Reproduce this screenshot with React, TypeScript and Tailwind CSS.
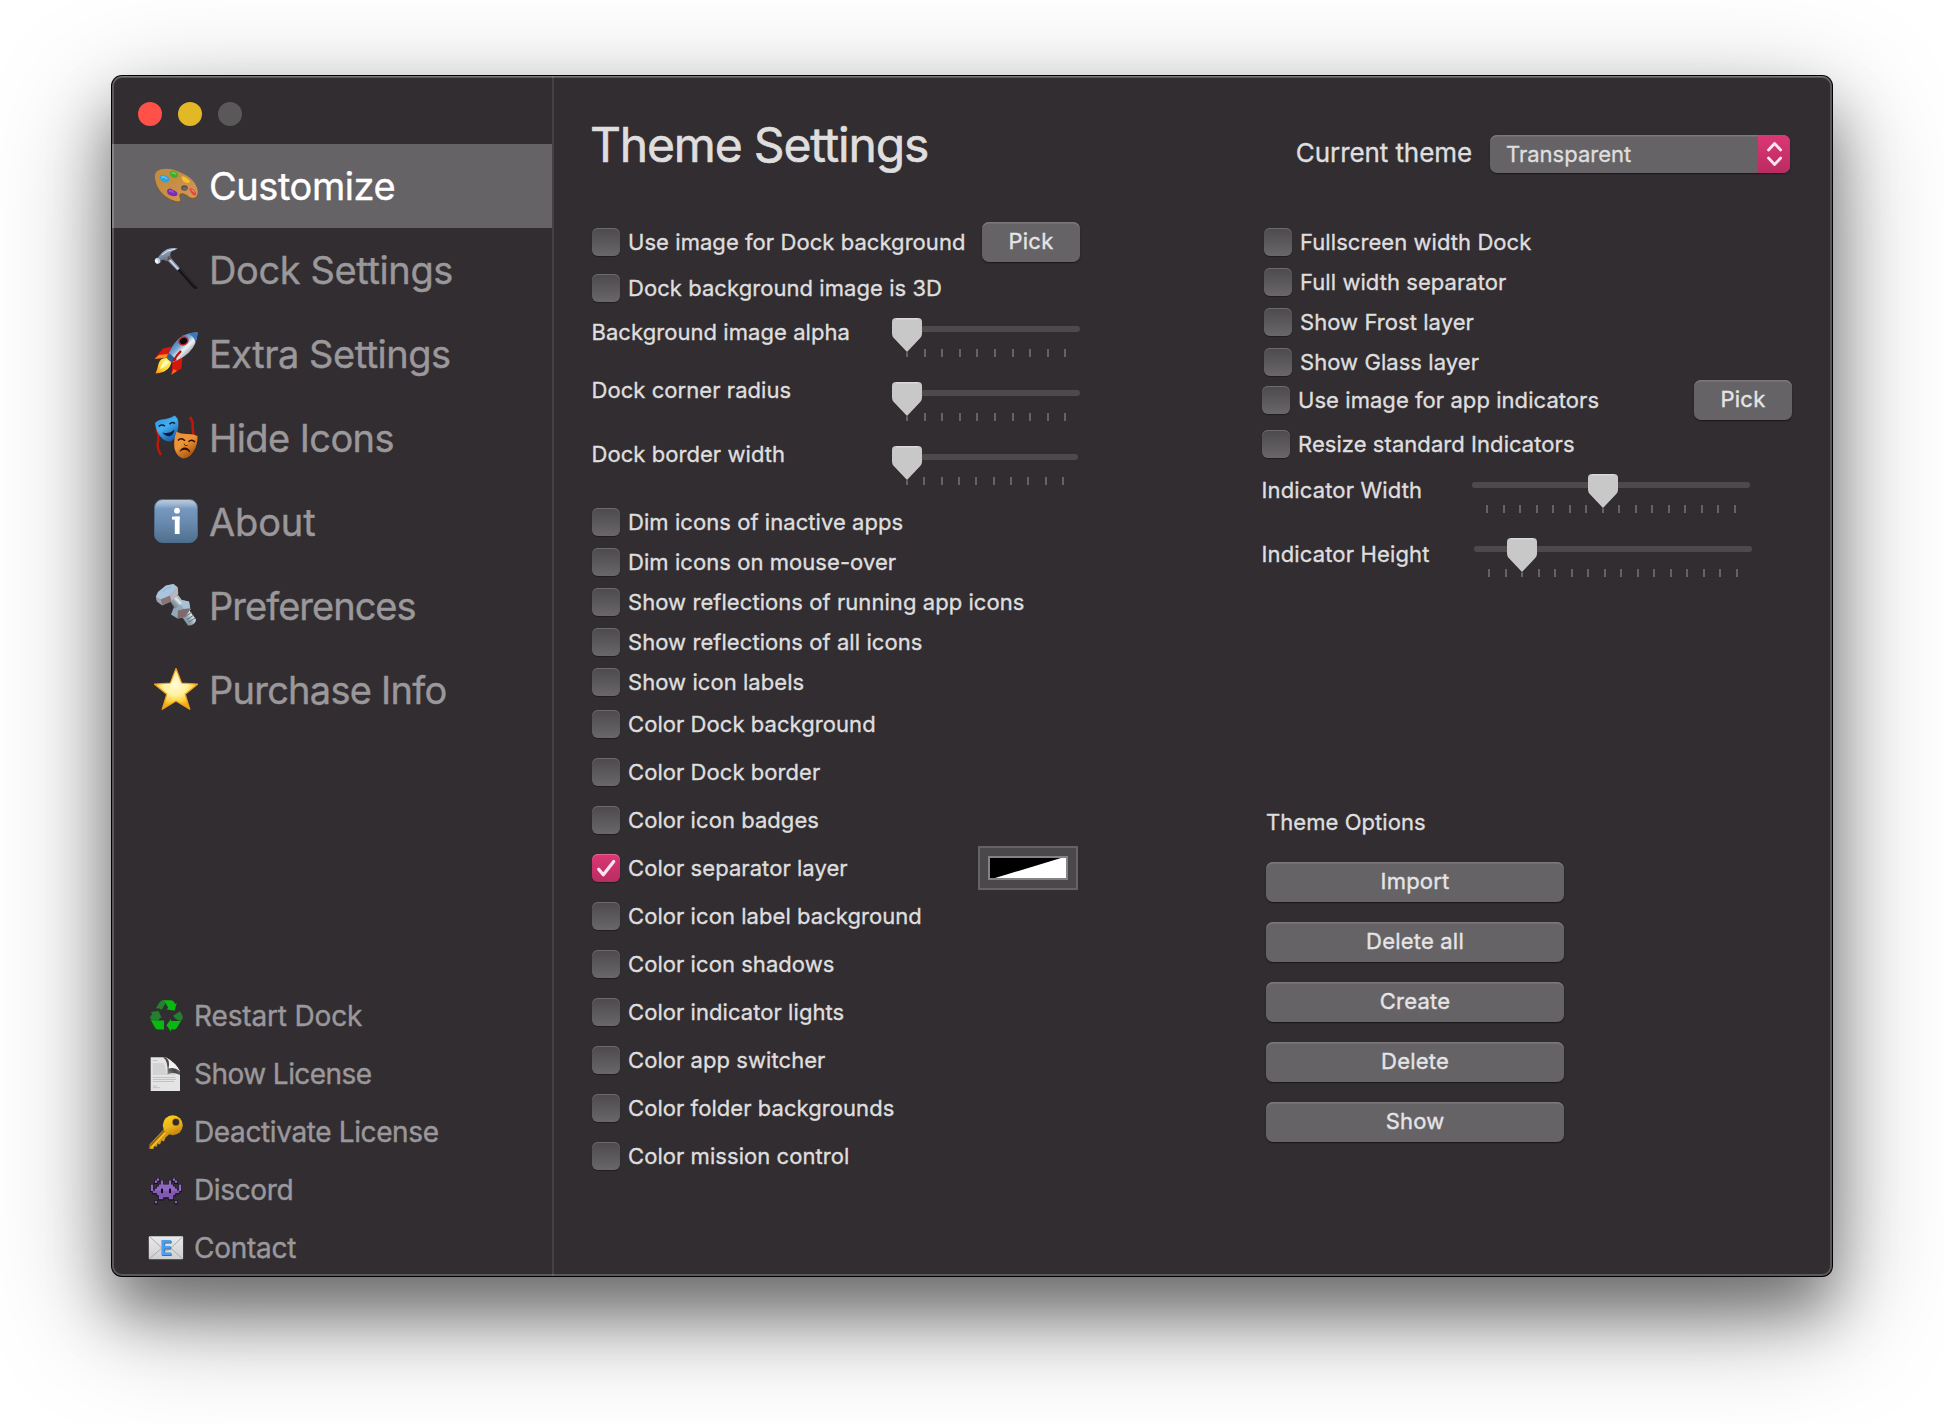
import type { ReactNode } from "react";

/* ---------- Sidebar icons (44 x 44) ---------- */

function PaletteIcon() {
  return (
    <svg viewBox="0 0 44 44" className="size-full">
      <defs>
        <linearGradient id="pal" x1="0" y1="0" x2="1" y2="1">
          <stop offset="0" stopColor="#c08a3c" />
          <stop offset="0.55" stopColor="#c98f49" />
          <stop offset="1" stopColor="#d79a60" />
        </linearGradient>
      </defs>
      <path d="M0.8 15C0.3 9 4 6 12.6 5.9C19 5.9 27 9.5 33 13.4C39.500 17.8 43.600 24 43.700 29.500C43.700 33.500 41.500 36.600 38 36C35 35.500 33 32.500 29.500 31.600C27 31 25.500 32.300 26.200 34.500C27 37 27.500 39.500 25 39.600C20 39.600 13 36.400 8.500 31.500C4 27 1.200 20.500 0.800 15Z" fill="#8a5a1c" />
      <path d="M0.9 14C0.6 8.500 4 5.900 12.600 5.700C19 5.700 27 9 33 12.800C39.500 17.200 43.600 23.300 43.700 28.700C43.700 32.500 41.500 35.400 38 34.800C35 34.300 33 31.300 29.500 30.400C26.500 29.800 24.700 31.300 25.400 33.700C26.200 36.200 26.700 38.300 24.600 38.300C20 38.300 13 35.400 8.500 30.500C4 26 1.200 19.500 0.900 14Z" fill="url(#pal)" />
      <ellipse cx="30.500" cy="25" rx="3.300" ry="2.700" fill="#5a4a3c" />
      <ellipse cx="30.800" cy="25.600" rx="2.500" ry="1.900" fill="#6a686a" />
      <path d="M5.500 13.500q1-2.500 4-1.500l3 1q3.500 1.500 3 4t-4.500 2.500q-4.500-.5-5.500-6z" fill="#2ea3dc" />
      <path d="M7.500 14q3-1 5.500 2" stroke="#8fdcf7" strokeWidth="1" fill="none" />
      <path d="M15.500 10q1-2.500 4-2l3.500 1.500q2 2.500.5 4.500t-4.500.5q-3-1-3.500-4.500z" fill="#3fae2a" />
      <path d="M17.500 10q3-1 4.500 1.500" stroke="#8fe07a" strokeWidth="1" fill="none" />
      <path d="M27.500 14.500q.5-2 3.500-.5t4.500 3.500-2 2.500q-5-.5-6-5.500z" fill="#f2c22c" />
      <path d="M13 28.500q0-3 3.500-3l3.500 2q4 1.500 3.500 4t-5 1.500q-5-.5-5.500-4.500z" fill="#7b2fb0" />
      <path d="M15 28q2.500-1 4.500 1.500" stroke="#b67be0" strokeWidth="1" fill="none" />
      <path d="M35.500 26q1-1.500 4 .5 3.500 3 2.500 5t-3 .2q-3-2-3.500-5.700z" fill="#e2473e" />
      <path d="M37.500 27q2 .5 3 2.500" stroke="#ff9c90" strokeWidth="1" fill="none" />
    </svg>
  );
}

function HammerIcon() {
  return (
    <svg viewBox="0 0 44 44" className="size-full">
      <defs>
        <linearGradient id="ham" x1="0" y1="0" x2="0.5" y2="1">
          <stop offset="0" stopColor="#c9d6ea" />
          <stop offset="0.500" stopColor="#8495ae" />
          <stop offset="1" stopColor="#5e6470" />
        </linearGradient>
      </defs>
      <path d="M23 22.500L26 20.500L43 39.500Q44 42 41.500 42Q40 41.800 38.500 40.200Z" fill="#161618" />
      <path d="M26 21.500L42 39.500" stroke="#3a3a3d" strokeWidth="0.900" />
      <path d="M12.500 12.500L16 10L26 21.200L23.200 23.500Z" fill="#8c97ab" />
      <path d="M14.800 12L24.300 22.300" stroke="#dde6f5" strokeWidth="1.200" />
      <path d="M4 10.500Q8 4.500 13 2.200Q18 .5 23.600 1.200Q22.500 3 18.500 4Q15.500 5 16.500 9.500L16.800 12.500L12.500 14.500Q9.500 11.500 7 13.800Z" fill="url(#ham)" />
      <path d="M8 8Q13 3 21 2" stroke="#e2ebf8" strokeWidth="1" fill="none" />
      <path d="M14 9.500L16.500 9V12L13.500 13.500Z" fill="#6b4e4c" />
      <ellipse cx="3.600" cy="13.800" rx="2.700" ry="3.100" fill="#bcd0ea" transform="rotate(-25 3.600 13.800)" />
      <ellipse cx="2.600" cy="14.300" rx="1.500" ry="2.100" fill="#f5faff" transform="rotate(-25 2.600 14.300)" />
    </svg>
  );
}

function RocketIcon() {
  return (
    <svg viewBox="0 0 44 44" className="size-full">
      <defs>
        <linearGradient id="rkt" x1="0.200" y1="0.200" x2="0.800" y2="0.800">
          <stop offset="0" stopColor="#2d66a8" />
          <stop offset="0.400" stopColor="#7fa8d2" />
          <stop offset="0.600" stopColor="#f1f4f4" />
          <stop offset="1" stopColor="#6f8089" />
        </linearGradient>
        <linearGradient id="flm" x1="1" y1="0" x2="0" y2="1">
          <stop offset="0" stopColor="#fff27a" />
          <stop offset="0.600" stopColor="#ffd52b" />
          <stop offset="1" stopColor="#ff8a12" />
        </linearGradient>
      </defs>
      <path d="M17.500 15.500L9 17.500L0.600 27.500L13 26.500Z" fill="#d5170d" />
      <path d="M5 24L0.500 28L12.500 26.800L14 23Z" fill="#ff8a18" />
      <path d="M28.500 26L27.500 37.500L17.500 43.500L18.500 31Z" fill="#d5170d" />
      <path d="M19.500 38L17.200 43.800L23 40Z" fill="#ff6a18" />
      <path d="M13 27Q6 26.500 4.500 33Q3.500 38 1.500 42.500Q12 41.500 15.500 36Q17.500 33 17 30Z" fill="url(#flm)" />
      <path d="M12.500 29Q7.500 31 6 38Q12.500 36 15 31Z" fill="#fffbb0" />
      <path d="M43.500 1.500Q33 1.500 26 6.500Q19.500 11.500 15 21.500L13 27.500L17.500 31.500Q28 28 35 21.500Q43 13.500 43.500 1.500Z" fill="url(#rkt)" />
      <path d="M43.500 1.500Q38 1.500 34 2.900Q40.500 5 41.500 12Q43.500 7.500 43.500 1.500Z" fill="#3b79bf" />
      <path d="M15 22L13 27.500L17.500 31.500L23 29Z" fill="#2c5b93" />
      <path d="M27 20Q22 25 19.500 30" stroke="#c00f0a" strokeWidth="2.400" fill="none" />
      <ellipse cx="29.500" cy="10" rx="5.400" ry="4.500" fill="#c22b23" transform="rotate(-28 29.500 10)" />
      <ellipse cx="29.500" cy="10" rx="3.800" ry="3" fill="#0d0a12" transform="rotate(-28 29.500 10)" />
    </svg>
  );
}

function MasksIcon() {
  return (
    <svg viewBox="0 0 44 44" className="size-full">
      <defs>
        <linearGradient id="mb" x1="0" y1="0" x2="0.600" y2="1">
          <stop offset="0" stopColor="#2a8ed8" />
          <stop offset="0.500" stopColor="#43b0f2" />
          <stop offset="1" stopColor="#1b5fae" />
        </linearGradient>
        <linearGradient id="mo" x1="0" y1="0" x2="0.600" y2="1">
          <stop offset="0" stopColor="#e8923a" />
          <stop offset="0.500" stopColor="#ee9436" />
          <stop offset="1" stopColor="#a9520f" />
        </linearGradient>
      </defs>
      <path d="M2.500 14Q5.500 22 3.800 28Q3 34 7 40" stroke="#c2160b" strokeWidth="2.400" fill="none" />
      <path d="M36 2Q39.500 7 38.500 12L39.500 20" stroke="#c2160b" strokeWidth="2.600" fill="none" />
      <path d="M1 8Q4 4.500 10.500 4.200Q17 3.500 20.500 0.600Q24.500 3 24.400 9Q24.300 17 21.500 22Q18.500 27 14.500 26.400Q9 25.500 5.500 20.500Q1.500 14.500 1 8Z" fill="url(#mb)" />
      <path d="M4.800 11.500Q7.500 8.500 11 11.200M15.500 9.300Q18 6 21 8.500" stroke="#0a1d38" strokeWidth="1.500" fill="none" />
      <path d="M8.500 17.500Q15 19.500 20.500 14.500Q19.500 20.500 15.500 21.200Q11.500 21.500 8.500 17.500Z" fill="#0a1d38" />
      <path d="M22.500 16.800Q27 19 32.500 19Q38.500 18.500 43.500 21Q43.800 30 39.500 36.500Q35 43.500 29 43.500Q22.500 41.500 20.500 33.500Q19.200 25 22.500 16.800Z" fill="url(#mo)" />
      <path d="M24 25.500Q27 22 31 25.800M34.500 26.800Q37.500 23.500 41 27" stroke="#2c0f02" strokeWidth="1.500" fill="none" />
      <path d="M25.500 37Q27 32 31.500 32.500Q36 33.500 36.500 38Q33.500 34.800 31 34.800Q28 34.800 25.500 37Z" fill="#2c0f02" />
      <path d="M30 28.500L31 30.500H33.500" stroke="#6b2f08" strokeWidth="1" fill="none" />
    </svg>
  );
}

function InfoIcon() {
  return (
    <svg viewBox="0 0 44 44" className="size-full">
      <defs>
        <linearGradient id="inf" x1="0" y1="0" x2="0" y2="1">
          <stop offset="0" stopColor="#bccbdd" />
          <stop offset="0.100" stopColor="#a3b9d2" />
          <stop offset="0.220" stopColor="#7598c0" />
          <stop offset="0.500" stopColor="#6b8cb0" />
          <stop offset="1" stopColor="#4e6f8c" />
        </linearGradient>
      </defs>
      <rect x="0.500" y="0.500" width="43" height="43" rx="8" fill="url(#inf)" stroke="#4d6e8f" strokeWidth="1" />
      <circle cx="23" cy="11.700" r="2.900" fill="#fff" />
      <rect x="18" y="17.600" width="7.600" height="3" fill="#fff" />
      <rect x="20.800" y="17.600" width="4.800" height="17.400" fill="#fff" />
    </svg>
  );
}

function BoltIcon() {
  return (
    <svg viewBox="0 0 44 44" className="size-full">
      <defs>
        <linearGradient id="shf" x1="0" y1="1" x2="1" y2="0">
          <stop offset="0" stopColor="#5b656c" />
          <stop offset="0.450" stopColor="#8fa1ab" />
          <stop offset="0.600" stopColor="#dfe9ee" />
          <stop offset="1" stopColor="#59636a" />
        </linearGradient>
      </defs>
      <path d="M16 17L24 12L42 36.500Q41.500 42.500 34 42.500Z" fill="url(#shf)" />
      <path d="M31.500 33.500L38 29M33 36.500L40 32M34.500 39L41.500 35" stroke="#59656d" strokeWidth="0.900" />
      <path d="M17 31.500L20 24L27.500 17L35 18.500L36.500 26.500L31 34.500L23.500 35.500Z" fill="#8fa9b8" />
      <path d="M27.500 17L35 18.500L36 25L30 26L26 20.500Z" fill="#a8c3d5" />
      <path d="M24 27.500L30 26L36.300 25.500L31 34.300L23.500 35.300Z" fill="#80686c" />
      <path d="M16 18L24 12.500L29 19.500L21 25.800Z" fill="url(#shf)" />
      <path d="M1.800 14L4 9L12 2.500L19.500 1L23.800 4.500L24.200 11L17.500 18.500L8.500 22.500L3 18.500Z" fill="#8b7478" />
      <path d="M1.800 14L4 9L12 2.500L19.500 1L23.800 4.500L16 12.500L6.500 16.500Z" fill="#a9c4dd" />
      <path d="M1.800 14L6.500 16.500L8.500 22.500L3 18.500Z" fill="#9aa5ad" />
      <path d="M16 12.500L23.800 4.500L24.200 11L17.500 18.500Z" fill="#b7b8bd" />
      <path d="M8.500 8.500Q12 4.500 17 4.500" stroke="#8bb2d9" strokeWidth="1" fill="none" />
    </svg>
  );
}

function StarIcon() {
  return (
    <svg viewBox="0 0 44 44" className="size-full">
      <defs>
        <radialGradient id="str" cx="0.480" cy="0.380" r="0.550">
          <stop offset="0" stopColor="#fffbd8" />
          <stop offset="0.500" stopColor="#fff1a0" />
          <stop offset="0.800" stopColor="#fdd13a" />
          <stop offset="1" stopColor="#f3a81a" />
        </radialGradient>
      </defs>
      <path d="M22 1.500L27.600 16L43.500 17.200L31.200 27.200L35.800 42.300L22 34L8.200 42.300L12.800 27.200L0.500 17.200L16.400 16Z" fill="url(#str)" stroke="#ef9f22" strokeWidth="1.200" strokeLinejoin="round" />
    </svg>
  );
}

/* ---------- Footer icons (34 x 34) ---------- */

function RecycleIcon() {
  return (
    <svg viewBox="0 0 34 34" className="size-full">
      <g fill="#267f30">
        <path d="M6.800 9.600L10 4Q11.500 1.300 14 1.300L17.300 3L12.800 10.800Q10 8.500 6.800 9.600Z" />
        <path d="M1.500 13L9.500 12L13 19.300L11.300 18.600L9.500 21.500H4.500L0.800 18.500L3.300 14.500Z" />
        <path d="M24 16.800L31 12.200L33.300 16.500Q34.300 18.500 33 20.500L29.500 21.300Q26.800 20.500 24 16.800Z" />
      </g>
      <g fill="#08b90f">
        <path d="M13.500 1.300H22Q24 1.300 25 3L26 5L27.800 4.300L25.500 11.800L17.300 10.300L19.300 9L16 2.800Z" />
        <path d="M1 19.300Q2.500 21.600 6 21.600H15V30.600H9.500Q7.200 30.600 6 28.700Z" />
        <path d="M33.300 19.500L28 28.700Q26.900 30.600 24.700 30.600H22V32.700L17.500 26.300L22 19.800V22H28.500Q31.800 22 33.300 19.500Z" />
      </g>
    </svg>
  );
}

function DocumentIcon() {
  return (
    <svg viewBox="0 0 34 34" className="size-full">
      <defs>
        <linearGradient id="curl" x1="0" y1="1" x2="1" y2="0.200">
          <stop offset="0" stopColor="#d0d0d0" />
          <stop offset="0.300" stopColor="#6a6a6a" />
          <stop offset="0.550" stopColor="#444" />
          <stop offset="1" stopColor="#bbb" />
        </linearGradient>
      </defs>
      <path d="M1.700 0.300H16.500L31 14V34.300H1.700Z" fill="#e4e4e4" />
      <path d="M3.800 3.500H8.500M3.800 7H15M3.800 9H16M3.800 11H16M3.800 13H17M3.800 15H17M3.800 17H26M3.800 20.500H26.500M3.800 22.500H27M3.800 24.500H25M3.800 29H8M3.800 30.700H11" stroke="#bdbdbd" strokeWidth="0.900" />
      <path d="M14 0.300Q19.500 4 18.500 17.500Q24 14.500 31 18V13.500L16.500 0.300Z" fill="url(#curl)" />
      <path d="M17 0.300Q21.500 4.500 19.500 11.500Q25.500 9.500 31 14Q27 6 17 0.300Z" fill="#f2f2f2" />
    </svg>
  );
}

function KeyIcon() {
  return (
    <svg viewBox="0 0 34 34" className="size-full">
      <defs>
        <linearGradient id="key" x1="0" y1="0" x2="0.400" y2="1">
          <stop offset="0" stopColor="#fbd21c" />
          <stop offset="0.600" stopColor="#eeb61a" />
          <stop offset="1" stopColor="#c68a12" />
        </linearGradient>
      </defs>
      <path d="M15 14L0.500 29.500V34H4.500L5 31.500H8L8.500 28.500L11 29.500L12.500 25.500L15 26.500L16.500 22.500L20.500 19Z" fill="#d39a14" />
      <path d="M15.500 15.500L1 31" stroke="#8c5f0a" strokeWidth="1.200" />
      <path d="M16.500 17.500L2.500 32.500" stroke="#f2c93c" strokeWidth="1.100" />
      <circle cx="23.800" cy="10.200" r="10" fill="url(#key)" />
      <circle cx="26.900" cy="7.200" r="3.900" fill="#b98212" />
      <circle cx="26.900" cy="7.200" r="3.100" fill="#2f2a2d" />
    </svg>
  );
}

const INVADER = [
  "...#.......#...",
  "..#..#...#..#..",
  ".....#...#.....",
  "#...#######...#",
  "#..#########..#",
  "#.###.###.###.#",
  ".####.###.####.",
  "...#########...",
  "....#######....",
  "....##...##....",
  "...............",
  "..#.........#..",
];

function InvaderIcon() {
  const cells = INVADER.flatMap((row, y) =>
    [...row].flatMap((c, x) => (c === "#" ? [{ x: 2 + x * 2, y: 5.500 + y * 2.050 }] : [])),
  );
  return (
    <svg viewBox="0 0 34 34" className="size-full">
      {cells.map((c, i) => (
        <rect key={i} x={c.x - 1} y={c.y - 0.500} width="4" height="3.900" fill="#17111d" />
      ))}
      {cells.map((c, i) => (
        <rect key={i} x={c.x - 0.200} y={c.y - 0.100} width="2.400" height="2.400" fill={c.y > 16 ? "#8259b3" : "#9169c2"} />
      ))}
      <rect x="12" y="15.600" width="2" height="4.500" fill="#120a1c" />
      <rect x="20" y="15.600" width="2" height="4.500" fill="#120a1c" />
    </svg>
  );
}

function EnvelopeIcon() {
  return (
    <svg viewBox="0 0 34 34" className="size-full overflow-visible">
      <defs>
        <linearGradient id="env" x1="0" y1="0" x2="0" y2="1">
          <stop offset="0" stopColor="#e9e9e9" />
          <stop offset="1" stopColor="#cfcfcf" />
        </linearGradient>
      </defs>
      <rect x="-0.200" y="5.300" width="34.300" height="23" rx="1" fill="url(#env)" />
      <path d="M1 6L14.500 18.500Q17.300 20.500 20 18.500L33.500 6M0.500 27.700L13 17M33.500 27.700L21.500 17" stroke="#a6a6a6" strokeWidth="0.900" fill="none" />
      <text x="17.500" y="24.700" textAnchor="middle" fontFamily="Inter" fontWeight="700" fontSize="19.500" fill="#5b6a7a">E</text>
      <text x="16.900" y="23.900" textAnchor="middle" fontFamily="Inter" fontWeight="700" fontSize="19.500" fill="#4a9ff5">E</text>
    </svg>
  );
}

/* ---------- Controls ---------- */

function Check({ label, checked = false }: { label: string; checked?: boolean }) {
  return (
    <label className="flex h-7 items-center gap-2 pl-0.5">
      {checked ? (
        <span className="size-7 shrink-0 rounded-[6px] bg-linear-to-b from-[#dc3776] to-[#b92c61] shadow-[inset_0_1px_0_#e5648f,0_1px_1px_rgba(0,0,0,0.35)]">
          <svg viewBox="0 0 28 28" className="size-7" fill="none">
            <path d="M6.700 15.300L11.300 20.700L21.700 7.500" stroke="#fbe4ee" strokeWidth="3.300" strokeLinecap="round" strokeLinejoin="round" />
          </svg>
        </span>
      ) : (
        <span className="size-7 shrink-0 rounded-[6px] bg-linear-to-b from-[#4c4a4c] to-[#696769] shadow-[inset_0_1px_0_#6c6a6c,0_1px_1px_rgba(0,0,0,0.35)]" />
      )}
      <span className="whitespace-nowrap">{label}</span>
    </label>
  );
}

function Button({ children, className }: { children: ReactNode; className: string }) {
  return (
    <button
      className={`${className} flex h-10 shrink-0 items-center justify-center rounded-[7px] bg-[#656366] pb-0.5 tracking-[0.2px] text-[#e6e5e6] shadow-[inset_0_1.5px_0_#7b797c,0_1px_1.5px_rgba(0,0,0,0.5)]`}
    >
      {children}
    </button>
  );
}

function Slider({ width, first, step, count, thumb }: { width: number; first: number; step: number; count: number; thumb: number }) {
  return (
    <svg width={width} height={40} viewBox={`0 0 ${width} 40`} className="shrink-0 overflow-visible">
      <rect x="0" y="8" width={width} height="6" rx="3" fill="#4d4a4d" />
      {Array.from({ length: count }, (_, i) => (
        <rect key={i} x={Math.round(first + i * step) - 1} y="31" width="2" height="8" fill="#656265" />
      ))}
      <g transform={`translate(${thumb - 15} 0)`}>
        <path d="M0 4.500Q0 0.500 4 0.500H26Q30 0.500 30 4.500V16Q30 18.500 28.500 20.300L16.200 34Q15 35 13.800 34L1.500 20.300Q0 18.500 0 16Z" fill="#252225" opacity="0.600" />
        <path d="M0 4Q0 0 4 0H26Q30 0 30 4V15.500Q30 18 28.500 19.800L16 33Q15 34 14 33L1.500 19.800Q0 18 0 15.500Z" fill="#c8c8c8" />
        <path d="M4 0.700H26" stroke="#dadada" strokeWidth="1.400" />
      </g>
    </svg>
  );
}

const NAV = [
  { label: "Customize", icon: <PaletteIcon />, style: "bg-[#656366] text-white tracking-[-0.45px]" },
  { label: "Dock Settings", icon: <HammerIcon />, style: "tracking-[-0.38px]" },
  { label: "Extra Settings", icon: <RocketIcon />, style: "tracking-[-0.5px]" },
  { label: "Hide Icons", icon: <MasksIcon />, style: "tracking-[-0.58px]" },
  { label: "About", icon: <InfoIcon />, style: "tracking-[-0.15px]" },
  { label: "Preferences", icon: <BoltIcon />, style: "tracking-[-0.98px]" },
  { label: "Purchase Info", icon: <StarIcon />, style: "tracking-[-0.75px]" },
];

const FOOTER = [
  { label: "Restart Dock", icon: <RecycleIcon />, style: "tracking-[-0.15px]" },
  { label: "Show License", icon: <DocumentIcon />, style: "tracking-[-0.55px]" },
  { label: "Deactivate License", icon: <KeyIcon />, style: "tracking-[-0.38px]" },
  { label: "Discord", icon: <InvaderIcon />, style: "tracking-[-0.35px]" },
  { label: "Contact", icon: <EnvelopeIcon />, style: "tracking-[-0.25px]" },
];

function Sidebar() {
  return (
    <aside className="flex w-[442px] shrink-0 flex-col border-r-2 border-[#454144] text-[#9a989a] [-webkit-text-stroke:0.4px_currentColor]">
      <div className="flex h-[68px] shrink-0 gap-4 pt-[26px] pl-[26px]">
        <span className="size-6 rounded-full bg-[#ff5148]" />
        <span className="size-6 rounded-full bg-[#e3b827]" />
        <span className="size-6 rounded-full bg-[#5a5859]" />
      </div>
      <nav>
        {NAV.map((n) => (
          <a key={n.label} className={`${n.style} flex h-[84px] items-center gap-[11px] pl-[42px] text-[38px] leading-none`}>
            <span className="mb-0.5 size-11 shrink-0">{n.icon}</span>
            <span className="whitespace-nowrap">{n.label}</span>
          </a>
        ))}
      </nav>
      <nav className="mt-auto -mb-px">
        {FOOTER.map((n) => (
          <a key={n.label} className={`${n.style} flex h-[58px] items-center gap-[11px] pl-[37px] text-[28px] leading-none`}>
            <span className="size-[34px] shrink-0">{n.icon}</span>
            <span className="whitespace-nowrap">{n.label}</span>
          </a>
        ))}
      </nav>
    </aside>
  );
}

function LeftColumn() {
  return (
    <div className="flex w-[490px] flex-col">
      <div className="flex h-10 items-center justify-between">
        <Check label="Use image for Dock background" />
        <Button className="w-[98px]">Pick</Button>
      </div>
      <div className="mt-3">
        <Check label="Dock background image is 3D" />
      </div>
      <div className="mt-4 flex flex-col gap-6 leading-7">
        <div className="flex h-10 justify-between pl-[1.5px]">
          <span>Background image alpha</span>
          <Slider width={188} first={15} step={17.600} count={10} thumb={15} />
        </div>
        <div className="flex h-10 justify-between pl-[1.5px]">
          <span className="-mt-1.5">Dock corner radius</span>
          <Slider width={188} first={15} step={17.600} count={10} thumb={15} />
        </div>
        <div className="flex h-10 justify-between pr-0.5 pl-[1.5px]">
          <span className="-mt-1.5">Dock border width</span>
          <Slider width={186} first={15} step={17.350} count={10} thumb={15} />
        </div>
      </div>
      <div className="mt-[22px] flex flex-col gap-3">
        <Check label="Dim icons of inactive apps" />
        <Check label="Dim icons on mouse-over" />
        <Check label="Show reflections of running app icons" />
        <Check label="Show reflections of all icons" />
        <Check label="Show icon labels" />
      </div>
      <div className="mt-[14px] flex flex-col gap-5">
        <Check label="Color Dock background" />
        <Check label="Color Dock border" />
        <Check label="Color icon badges" />
        <div className="flex h-7 items-center justify-between pr-0.5">
          <Check label="Color separator layer" checked />
          <div className="-my-2 h-11 w-[100px] border-2 border-[#656366] bg-[#4a484a] p-2">
            <div className="h-full border-2 border-[#848284]">
              <svg viewBox="0 0 76 20" preserveAspectRatio="none" className="block size-full">
                <rect width="76" height="20" fill="#fff" />
                <path d="M0 0H71L5 20H0Z" fill="#000" />
              </svg>
            </div>
          </div>
        </div>
        <Check label="Color icon label background" />
        <Check label="Color icon shadows" />
        <Check label="Color indicator lights" />
        <Check label="Color app switcher" />
        <Check label="Color folder backgrounds" />
        <Check label="Color mission control" />
      </div>
    </div>
  );
}

function RightColumn() {
  return (
    <div className="ml-[180px] flex w-[532px] flex-col">
      <div className="mt-1.5 flex flex-col gap-3 pl-0.5">
        <Check label="Fullscreen width Dock" />
        <Check label="Full width separator" />
        <Check label="Show Frost layer" />
        <Check label="Show Glass layer" />
      </div>
      <div className="mt-1 flex h-10 items-center justify-between">
        <Check label="Use image for app indicators" />
        <Button className="w-[98px]">Pick</Button>
      </div>
      <div className="mt-2.5">
        <Check label="Resize standard Indicators" />
      </div>
      <div className="mt-4 flex flex-col gap-6 pl-[1.5px] leading-7 tracking-[0.15px]">
        <div className="flex h-10 justify-between pr-[42px]">
          <span className="mt-0.5">Indicator Width</span>
          <Slider width={278} first={15} step={16.530} count={16} thumb={131} />
        </div>
        <div className="flex h-10 justify-between pr-10">
          <span className="mt-0.5">Indicator Height</span>
          <Slider width={278} first={15} step={16.530} count={16} thumb={48} />
        </div>
      </div>
      <div className="mt-[230px] pl-1.5 leading-7">Theme Options</div>
      <div className="mt-[26px] flex flex-col gap-5 pl-1.5">
        {["Import", "Delete all", "Create", "Delete", "Show"].map((t) => (
          <Button key={t} className="w-[298px]">
            {t}
          </Button>
        ))}
      </div>
    </div>
  );
}

export default function App() {
  return (
    <div className="h-[1424px] w-[1944px] overflow-hidden bg-white px-28 pt-[76px] font-['Inter',sans-serif]">
      <div className="relative flex h-[1200px] w-[1720px] overflow-visible rounded-[10px] bg-[#322d31] shadow-[0_0_0_1px_#000,0_36px_60px_rgba(0,0,0,0.4),0_36px_120px_rgba(0,0,0,0.36)]">
        <Sidebar />
        <main className="flex-1 pl-9 text-[22px] leading-none tracking-[0.06px] text-[#dfdedf] [-webkit-text-stroke:0.35px_currentColor]">
          <header className="flex h-[146px] items-start">
            <h1 className="mt-[39px] text-[48px] leading-[60px] tracking-[-1.18px] [-webkit-text-stroke:0.6px_currentColor]">Theme Settings</h1>
            <span className="mt-[59px] mr-[18px] ml-auto text-[26px] leading-9 tracking-[-0.08px]">Current theme</span>
            <div className="mt-[59px] mr-[42px] flex h-[38px] w-[300px] items-center overflow-hidden rounded-[7px] bg-[#656366] pl-4 shadow-[inset_0_1.5px_0_#7b797c,0_1px_1.5px_rgba(0,0,0,0.5)]">
              <span className="tracking-normal">Transparent</span>
              <span className="ml-auto h-full w-8 bg-linear-to-b from-[#dc3776] to-[#b92c61]">
                <svg viewBox="0 0 32 38" className="h-full w-8" fill="none" stroke="#fbe4ee" strokeWidth="2.800" strokeLinecap="round" strokeLinejoin="round">
                  <path d="M10.500 15L16.600 8.500L22.700 15M10.500 23L16.600 29.500L22.700 23" />
                </svg>
              </span>
            </div>
          </header>
          <div className="flex">
            <LeftColumn />
            <RightColumn />
          </div>
        </main>
        <div className="pointer-events-none absolute inset-0 rounded-[10px] shadow-[inset_0_0_0_2px_rgba(255,255,255,0.2),inset_0_1px_0_rgba(255,255,255,0.2)]" />
      </div>
    </div>
  );
}
